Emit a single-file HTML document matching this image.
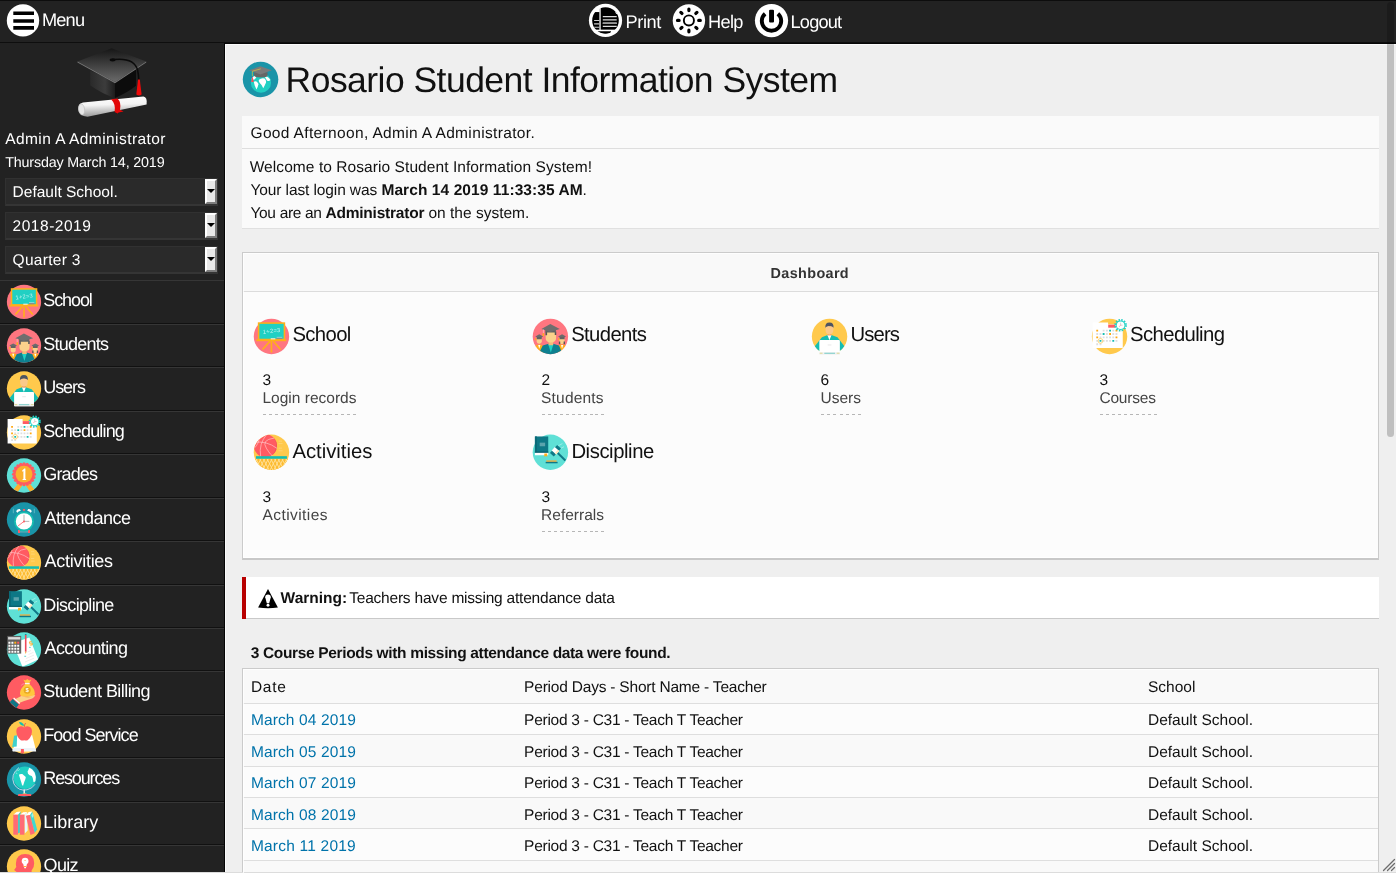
<!DOCTYPE html><html><head><meta charset="utf-8"><title>Rosario Student Information System</title><style>
html,body{margin:0;padding:0}
body{will-change:transform;width:1396px;height:873px;overflow:hidden;position:relative;background:#efefef;font-family:"Liberation Sans",sans-serif;}
div,span,svg{position:absolute;display:block}
.t{white-space:pre;line-height:1;color:#fff;text-rendering:geometricPrecision}
.k{color:#111}.g{color:#444}.a{color:#0073aa}.b{font-weight:700}
.f18{font-size:18.2px}.f16{font-size:15.5px}.f145{font-size:14.7px}.f20{font-size:20.3px}.f14{font-size:14.4px}
#top{left:0;top:0;width:1396px;height:42px;background:#222;border-top:1px solid #0d0d0d;box-sizing:border-box}
#topl{left:0;top:42px;width:1396px;height:1px;background:#0e0e0e}
#topl2{left:224px;top:43px;width:1172px;height:1px;background:#070707}
#side{left:0;top:43px;width:224px;height:829px;background:#222}
#sideb{left:224px;top:43px;width:1px;height:829px;background:#050505}
#hl1{left:225px;top:44px;width:1171px;height:1px;background:#fbfbfb}
#hl2{left:225px;top:44px;width:1px;height:828px;background:#fbfbfb}
#bot{left:0;top:872px;width:1396px;height:1px;background:#dcdcdc}
.sel{left:5px;width:211px;height:25px;background:#2a2a2a;border:1px solid #313131;border-bottom:2px solid #353535}
.selb{left:205px;width:12px;height:25px;background:#e8e8e8;box-sizing:border-box;border:2px solid;border-color:#fff #7c7c7c #7c7c7c #fff}
.selb:after{content:"";position:absolute;left:.2px;top:8.2px;border:4px solid transparent;border-top:4.6px solid #000;border-bottom:0}
.ms{left:0;width:224px;height:1px}
.ms1{background:#111}.ms2{background:#363636}
.box{background:#fafafa}
.ln{height:1px}
</style></head><body>
<svg width="0" height="0" style="left:0;top:0"><defs>
<clipPath id="cc"><circle cx="17" cy="17" r="17.15"/></clipPath>
<clipPath id="ci"><circle cx="17" cy="17" r="13.3"/></clipPath>
<!-- School -->
<g id="i0"><circle cx="17" cy="17" r="17.15" fill="#ff7680"/>
<path d="M15.6 21.5L8.4 29.6M18.8 21.5L25.8 29.6M17 21.5V32.5" stroke="#ffb019" stroke-width="1.6" fill="none"/>
<rect x="3.8" y="3.3" width="26.5" height="17" fill="#ffb019"/><rect x="2.3" y="19.7" width="29" height="1.9" fill="#ffb019"/>
<rect x="5.3" y="4.8" width="23.5" height="14.4" fill="#21d0c3"/>
<text x="17.3" y="13.5" font-family="Liberation Sans, sans-serif" font-size="5.6" fill="#c9f5f1" text-anchor="middle" transform="rotate(-7 17.3 12)" letter-spacing=".3">1+2=3</text>
<rect x="16.3" y="18.8" width="4.4" height="1" fill="#fff4e0"/><rect x="22" y="17.8" width="5.4" height="1.6" fill="#8c8c8c"/><rect x="22" y="17.4" width="5.4" height=".7" fill="#9fe8e4"/></g>
<!-- Students -->
<g id="i1"><circle cx="17" cy="17" r="17.15" fill="#ff7680"/><g clip-path="url(#cc)">
<path d="M1.5 34V26.5L5 24.8H7.5L10.5 26.5V34z" fill="#ffb019"/><path d="M5.2 25.2H7.3L6.2 28.8z" fill="#fff"/>
<path d="M24 34V26.5L27 24.8H29.5L33 26.5V34z" fill="#ffb019"/><path d="M27.3 25.2H29.4L28.3 28.8z" fill="#fff"/>
<rect x="3.7" y="17.6" width="5" height="6.4" rx="2.3" fill="#fbd18b"/><rect x="25.7" y="17.6" width="5" height="6.8" rx="2.3" fill="#fbd18b"/>
<path d="M25.2 22h1.3v2.6h-1.3zM29.8 22h1.3v2.6h-1.3z" fill="#555"/>
<path d="M6.2 14.9L10 17L6.2 18.8L2.4 17z" fill="#6b6b6b"/><path d="M3.8 17.5H8.6V19.6H3.8z" fill="#636363"/>
<path d="M28.3 14.9L32.1 17L28.3 18.8L24.5 17z" fill="#6b6b6b"/><path d="M25.9 17.5H30.7V19.6H25.9z" fill="#636363"/>
<rect x="2.3" y="18.5" width="1" height="2.2" fill="#ffb019"/><rect x="24.6" y="18.5" width="1" height="2.2" fill="#ffb019"/>
<path d="M7 31L9.6 25.8L15.2 24H19.7L25.3 25.8L27.6 31V35H7z" fill="#0e8090"/>
<path d="M14.9 24.6H19.9L17.4 32.6z" fill="#21d0c3"/>
<rect x="15.2" y="21.5" width="4.5" height="4" fill="#f4b97a"/>
<path d="M12.4 12H22.5V18.5Q22.5 22.8 17.45 22.8Q12.4 22.8 12.4 18.5z" fill="#fbd18b"/>
<path d="M12.2 12.3h1.6v3.6h-1.6zM21.2 12.3h1.5v3.2h-1.5z" fill="#555"/>
<path d="M12.1 10H22.3V13.2H12.1z" fill="#626262"/>
<path d="M16.9 5L26.1 9.7L16.9 12.6L8.3 9.7z" fill="#6e6e6e"/>
<path d="M10.2 10.2V13.8" stroke="#ffe3e5" stroke-width=".5"/><rect x="9.5" y="13.8" width="1.4" height="2.9" rx=".4" fill="#ffb019"/></g></g>
<!-- Users -->
<g id="i2"><circle cx="17" cy="17" r="17.15" fill="#ffc94c"/><g clip-path="url(#cc)">
<path d="M0 30L9.6 17.8L15.1 15.7H18.7L24.7 17.8L34 30V36H0z" fill="#15bdb2"/>
<path d="M14.9 15.7H18.9L16.9 20.6z" fill="#fff"/><rect x="15.3" y="14.2" width="3.4" height="1.8" fill="#f08a5a"/>
<path d="M13.1 6.5H20.7V10.5Q20.7 14.9 16.9 15.3Q13.1 14.9 13.1 10.5z" fill="#fbc98a"/>
<path d="M12.9 8.6Q12.6 3.4 16.9 3.4Q21.2 3.4 20.9 8.6Q19.5 6.8 16.9 7Q14.3 6.8 12.9 8.6z" fill="#4d5461"/></g>
<rect x="7.1" y="20.4" width="19.9" height="14.4" rx="1" fill="#fff"/>
<rect x="7.1" y="32.3" width="19.9" height="2.5" rx=".6" fill="#f1f1f1"/><rect x="11.9" y="32.8" width="10.4" height=".9" fill="#6cc8c3"/>
<rect x="7.4" y="32.8" width="2.8" height=".8" fill="#d8d27c"/><rect x="23.9" y="32.8" width="2.8" height=".8" fill="#d8d27c"/>
<rect x="15.2" y="24.8" width="3.6" height=".9" fill="#e6e6e6"/></g>
<!-- Scheduling -->
<g id="i3"><circle cx="17" cy="17" r="17.15" fill="#ffc94c"/>
<path d="M.6 3.6H15.6V5.4H29.8V28.1H.6z" fill="#fff"/><rect x="15.7" y="5.6" width="7" height="2.9" fill="#ff5b62"/>
<g fill="#dedede"><path d="M10.35 10.4h1.8v1.8h-1.8zM13.5 10.4h1.8v1.8h-1.8zM19.7 10.4h1.8v1.8h-1.8zM4.15 13.7h1.8v1.8h-1.8zM7.3 13.7h1.8v1.8h-1.8zM13.5 13.7h1.8v1.8h-1.8zM19.7 13.7h1.8v1.8h-1.8zM22.8 13.7h1.8v1.8h-1.8zM7.3 17h1.8v1.8h-1.8zM10.35 17h1.8v1.8h-1.8zM13.5 17h1.8v1.8h-1.8zM16.6 17h1.8v1.8h-1.8zM19.7 17h1.8v1.8h-1.8zM4.15 20.4h1.8v1.8h-1.8zM10.35 20.4h1.8v1.8h-1.8zM13.5 20.4h1.8v1.8h-1.8zM16.6 20.4h1.8v1.8h-1.8zM22.8 20.4h1.8v1.8h-1.8zM4.15 23.7h1.8v1.8h-1.8zM7.3 23.7h1.8v1.8h-1.8z"/></g>
<g fill="#ffa812"><path d="M4.15 10.4h1.8v1.8h-1.8zM22.8 10.4h1.8v1.8h-1.8zM16.6 13.7h1.8v1.8h-1.8zM4.15 17h1.8v1.8h-1.8zM22.8 17h1.8v1.8h-1.8z"/></g>
<g fill="#15bdb2"><path d="M16.6 10.4h1.8v1.8h-1.8zM10.35 13.7h1.8v1.8h-1.8zM7.3 20.4h1.8v1.8h-1.8zM19.7 20.4h1.8v1.8h-1.8z"/></g>
<circle cx="8.2" cy="21.3" r="2.3" fill="none" stroke="#ffc94c" stroke-width=".7"/>
<circle cx="27.7" cy="6.1" r="5.2" fill="none" stroke="#1fd1c6" stroke-width="1.8" stroke-dasharray="1.5 1.22"/><circle cx="27.7" cy="6.1" r="4.6" fill="#1fd1c6"/><circle cx="27.7" cy="6.1" r="3.7" fill="#fff"/>
<path d="M27.7 3.6V6.1H29.6" stroke="#bbb" stroke-width=".6" fill="none"/><path d="M27.7 6.1L26.4 7.6" stroke="#ff5b62" stroke-width=".5"/></g>
<!-- Grades -->
<g id="i4"><circle cx="17" cy="17" r="17.15" fill="#5fe0d6"/><g clip-path="url(#cc)">
<path d="M11.6 24.6L15.5 26.8L10.2 34.2L8.9 32.3L6 31.8z" fill="#fbb02d"/><path d="M22.4 24.6L18.5 26.8L23.8 34.2L25.1 32.3L28 31.8z" fill="#fbb02d"/></g>
<g fill="#ff5b62"><circle cx="17" cy="15.7" r="10.6"/><circle cx="17.00" cy="5.20" r="1.55"/><circle cx="20.24" cy="5.71" r="1.55"/><circle cx="23.17" cy="7.21" r="1.55"/><circle cx="25.49" cy="9.53" r="1.55"/><circle cx="26.99" cy="12.46" r="1.55"/><circle cx="27.50" cy="15.70" r="1.55"/><circle cx="26.99" cy="18.94" r="1.55"/><circle cx="25.49" cy="21.87" r="1.55"/><circle cx="23.17" cy="24.19" r="1.55"/><circle cx="20.24" cy="25.69" r="1.55"/><circle cx="17.00" cy="26.20" r="1.55"/><circle cx="13.76" cy="25.69" r="1.55"/><circle cx="10.83" cy="24.19" r="1.55"/><circle cx="8.51" cy="21.87" r="1.55"/><circle cx="7.01" cy="18.94" r="1.55"/><circle cx="6.50" cy="15.70" r="1.55"/><circle cx="7.01" cy="12.46" r="1.55"/><circle cx="8.51" cy="9.53" r="1.55"/><circle cx="10.83" cy="7.21" r="1.55"/><circle cx="13.76" cy="5.71" r="1.55"/></g>
<circle cx="17" cy="15.7" r="8.4" fill="#fbb02d"/>
<path d="M15 12.2L17.3 9.9H18.4V20.5H19.1V21.4H15.6V20.5H16.4V12.6L15.4 13.2z" fill="#fff"/></g>
<!-- Attendance -->
<g id="i5"><circle cx="17" cy="17" r="17.15" fill="#1a94a8"/>
<path d="M9.3 9.2Q9.6 6.2 12.8 6.4L13.8 8.2Q11 8.6 10.6 10.3z" fill="#fff"/><path d="M24.7 9.2Q24.4 6.2 21.2 6.4L20.2 8.2Q23 8.6 23.4 10.3z" fill="#fff"/>
<rect x="15.9" y="6.5" width="2.2" height="1.7" rx=".5" fill="#ff5b62"/>
<path d="M6.3 6.2V10.7M27.3 6.2V10.7" stroke="#6fc0cc" stroke-width="1" opacity=".75"/>
<path d="M11 27.6H13V30.4H11zM21 27.6H23V30.4H21z" fill="#ff5b62"/><path d="M13 29.4H21" stroke="#9fb9c0" stroke-width=".8"/>
<circle cx="17" cy="18.9" r="9.1" fill="#fff" stroke="#15bdb2" stroke-width="1.8"/>
<path d="M17 18.9V12.2" stroke="#c9c9c9" stroke-width="1.4"/><path d="M17 18.9H22.3" stroke="#bdbdbd" stroke-width="1.1"/>
<path d="M17 18.9L11.1 23.4" stroke="#ff5b62" stroke-width=".8"/><circle cx="17" cy="18.9" r="1" fill="#ff5b62"/></g>
<!-- Activities -->
<g id="i6"><circle cx="17" cy="17" r="17.15" fill="#ffc94c"/><g clip-path="url(#cc)">
<rect x="0" y="23.3" width="34" height="11" fill="#fdbb2f"/>
<path d="M2 23.3l5.5 11M5.600000000000001 23.3l5.5 11M9.2 23.3l5.5 11M12.8 23.3l5.5 11M16.4 23.3l5.5 11M20 23.3l5.5 11M23.6 23.3l5.5 11M27.2 23.3l5.5 11M30.8 23.3l5.5 11M32 23.3l-5.5 11M28.4 23.3l-5.5 11M24.8 23.3l-5.5 11M21.2 23.3l-5.5 11M17.6 23.3l-5.5 11M14 23.3l-5.5 11M10.4 23.3l-5.5 11M6.8 23.3l-5.5 11M3.2 23.3l-5.5 11" stroke="#ffe19a" stroke-width=".9" fill="none"/>
<circle cx="11.1" cy="10.7" r="11.2" fill="#ff5b62"/><path d="M20.2 4.2A11.2 11.2 0 0 1 17.5 19.9A13 13 0 0 0 20.2 4.2z" fill="#ee4e5a"/>
<path d="M12.5 -.4Q4.5 9 6.5 21M0 7.5Q12 5.5 22.5 13.3M5.5 1.3Q5 9 .2 13.2M19.5 3.3Q7 5 12 13T19 21" stroke="#ffd0d3" stroke-width=".6" fill="none"/>
<path d="M24 6.2h3.2M23.8 8.6h4M24 13h3.2M23.8 15.6h4" stroke="#ffdb8a" stroke-width=".6"/>
<rect x="2" y="20.8" width="30" height="2.5" fill="#15bdb2"/></g></g>
<!-- Discipline -->
<g id="i7"><circle cx="17" cy="17" r="17.15" fill="#5fe0d6"/>
<path d="M24.5 10.8L28.6 8.6M26.5 13.6L30.2 11.6" stroke="#a8efe9" stroke-width=".8"/>
<rect x="2" y="1.7" width="12.9" height="15.8" fill="#0e7886"/><rect x="2" y="1.7" width="2" height="15.8" fill="#0b6a78"/><rect x="2" y="16.2" width="12.9" height="1.4" fill="#0b6170"/>
<rect x="6.6" y="7.7" width="5.3" height="3.5" fill="#5aa3ac"/>
<rect x="2" y="17.6" width="12.9" height="2.3" fill="#fff"/><path d="M11.1 18.3H13.9V21.4L12.5 20.6L11.1 21.4z" fill="#ffb019"/>
<path d="M21.9 15.5L31.5 25" stroke="#0e7886" stroke-width="1.9"/>
<g transform="rotate(-48 21.9 15.5)"><rect x="16.7" y="13" width="10.4" height="5" fill="#0e7886"/><rect x="19.7" y="12.6" width="4.4" height="5.8" fill="#fff"/><rect x="19.7" y="16.6" width="4.4" height="1.8" fill="#ffe7bd"/></g>
<rect x="13" y="24.8" width="10" height="1.6" fill="#e3b44c"/><rect x="12.4" y="26.3" width="11.6" height="1.4" fill="#0e7886"/></g>
<!-- Accounting -->
<g id="i8"><circle cx="17" cy="17" r="17.15" fill="#5fe0d6"/><g clip-path="url(#cc)"><path d="M13.5 7.9L22.4 4.9L31.2 27L15.4 34.2L10.4 21.8z" fill="#fff"/>
<path d="M20.5 19.5l3.5-1.5M21.5 22l5-2.2M19 26l8-3.4M18 29.5l9-3.8" stroke="#eee" stroke-width="1"/></g>
<rect x=".3" y="3.4" width="13.9" height="17.7" fill="#616161"/><rect x="1.1" y="4.6" width="12.2" height="2.4" fill="#dcdcdc"/>
<g fill="#fff"><path d="M1.4 9.2h2v2h-2zM4.4 9.2h2v2h-2zM1.4 12.2h2v2h-2zM4.4 12.2h2v2h-2zM7.3 12.2h2v2h-2zM10.2 12.2h2v2h-2zM1.4 15.2h2v2h-2zM4.4 15.2h2v2h-2zM7.3 15.2h2v2h-2zM10.2 15.2h2v2h-2zM1.4 18.2h2v2h-2zM4.4 18.2h2v2h-2zM7.3 18.2h2v2h-2zM10.2 18.2h2v2h-2z"/></g>
<rect x="7.3" y="9.2" width="2" height="2" fill="#ffb019"/><rect x="10.2" y="9.2" width="2" height="2" fill="#ff5b62"/>
<rect x="17.9" y="1.6" width="1.6" height="1.1" fill="#1a7f8e"/><rect x="17.9" y="2.6" width="1.6" height="16.6" fill="#ee4a5a"/><path d="M17.9 19.2H19.5L18.7 21.4z" fill="#f5b041"/>
<text x="24" y="13" font-family="Liberation Sans, sans-serif" font-size="6.4" font-weight="700" fill="#f7b330" text-anchor="middle" transform="rotate(-22 24 11)">$</text>
<rect x="22" y="14.4" width="1.8" height=".8" fill="#49cfc6"/><rect x="17.3" y="23.3" width="1.8" height=".9" fill="#49cfc6"/></g>
<!-- Student Billing -->
<g id="i9"><circle cx="17" cy="17" r="17.15" fill="#ff5b62"/>
<path d="M18.2 7.6L16.3 3.9L18.4 4.9L20.3 3.4L22.2 4.9L24.3 3.9L22.4 7.6z" fill="#ffc83d"/>
<path d="M18.3 8.6H22.4Q27.8 13.5 27.8 17.8Q27.8 21.2 24.4 21.2H16.4Q13 21.2 13 17.8Q13 13.5 18.3 8.6z" fill="#ffc83d"/>
<path d="M8.6 23.6L14.2 20.6Q18 21.6 22.2 21L28.4 19.6Q27.5 22 25.2 22.9L17.2 25.4L12.1 27.4z" fill="#fbd18b"/><path d="M17 21.3Q22 22.2 27 20.4Q25 22 21 22.4Q18.5 22.3 17 21.3z" fill="#f3bd72"/>
<rect x="18" y="7.4" width="4.7" height="1.3" fill="#fff3f0"/><path d="M17.8 8.2Q14.8 8 14.4 10" stroke="#ff9aa0" stroke-width=".8" fill="none"/>
<circle cx="20.2" cy="14.7" r="3.5" fill="#e9a820"/>
<text x="20.2" y="16.9" font-family="Liberation Sans, sans-serif" font-size="5.8" font-weight="700" fill="#fff" text-anchor="middle">$</text>
<path d="M5.7 23.6L11.8 29L9.3 32.6L2.7 26.7z" fill="#0e7886"/><path d="M6.6 22.6L12.7 28" stroke="#fff" stroke-width="1.3"/></g>
<!-- Food Service -->
<g id="i10"><circle cx="17" cy="17" r="17.15" fill="#ffc94c"/>
<path d="M10.1 15.7H25.2L29.2 31.9H5.6z" fill="#fff"/><path d="M7.1 16.3L10.2 15.7L9.7 27L5.2 27.6z" fill="#3fd2cc"/>
<path d="M5.6 28.6H28.2L29 31.6H5.4z" fill="#edf3f8"/><path d="M13.9 29.6H16.9V34.2L15.4 33.2L13.9 34.2z" fill="#ff5b62"/>
<path d="M17.1 8.1Q19.5 6 22.3 7.2Q25.4 8.6 24.9 12.8Q24.2 18 20.6 20.8Q19.3 21.4 17.2 20.8Q15.2 21.4 13.8 20.8Q10 18 9.4 12.8Q8.9 8.6 12 7.2Q14.7 6 17.1 8.1z" fill="#ff5b62"/>
<path d="M17.2 7.6Q17.3 5 18.6 3.6" stroke="#e64c57" stroke-width=".9" fill="none"/><path d="M12 2.6Q15.6 2.3 17.2 6.3Q13.3 6.6 12 2.6z" fill="#15bdb2"/></g>
<!-- Resources -->
<g id="i11"><circle cx="17" cy="17" r="17.15" fill="#1a94a8"/>
<path d="M17.2 27V31" stroke="#fff" stroke-width="1.3"/><rect x="11.1" y="31.5" width="13.1" height="2.1" rx=".5" fill="#ff5b62"/><path d="M15 31.6Q17.7 30 20.2 31.6z" fill="#e8d36a"/>
<circle cx="17.9" cy="15.2" r="11.3" fill="#21d0c3"/>
<path d="M12 5Q3 12 7 21.5Q11.5 29 20 27.3Q25.5 26 28 21.8" stroke="#dfe6f5" stroke-width=".8" fill="none"/>
<path d="M11.9 12.2Q13.3 11 15.3 11.6L18.8 14.6Q18.6 17 17.6 18.6Q16.6 21.6 16 23.6Q14.6 22.5 14.5 20.4Q13.2 16.6 11.9 12.2z" fill="#fff"/>
<path d="M22.4 5.2Q25.5 6.4 27.6 10Q29.5 14 28.4 18.6Q27.4 20 26.5 19.4Q26.3 15.6 24.8 13.6Q22.3 13.2 21 11.2Q19.9 8.8 21.4 7.6Q21.6 6 22.4 5.2z" fill="#fff"/>
<path d="M9.3 8.6l1.6-1.3.6.6 1.2-1M8.8 10.4l1.5.7" stroke="#d5f3f1" stroke-width=".6" fill="none"/></g>
<!-- Library -->
<g id="i12"><circle cx="17" cy="17" r="17.15" fill="#ffc94c"/>
<path d="M10.9 8.2L13.7 5.1L13 26L10.9 27z" fill="#4fc9c4"/><path d="M6.3 8.2H10.9L13.7 5.1L9.6 5.4z" fill="#fff"/><rect x="6.3" y="8.2" width="4.6" height="20" fill="#ff6b76"/>
<path d="M17.4 8.2L20.2 5.6L20.7 24L17.7 27z" fill="#e6f6fb"/><path d="M12.9 8.2H17.4L20.2 5.4L16.2 5.7z" fill="#fff"/><rect x="12.9" y="8.2" width="4.5" height="20" fill="#ff6b76"/>
<path d="M22.9 8.4L25.2 4.9L30.1 23L27.7 26.4z" fill="#3fd8d2"/><path d="M24.4 8.6l1.4-2 .8 2.8-1.5 2z" fill="#9ff0ec"/><path d="M18.9 9.2L22.9 8.4L25.2 4.9L21.7 5.6z" fill="#fff"/><path d="M18.9 9.2L22.9 8.4L27.8 26.8L23.5 28.4z" fill="#ff6b76"/></g>
<!-- Quiz -->
<g id="i13"><circle cx="17" cy="17" r="17.15" fill="#ffc94c"/><g clip-path="url(#cc)">
<path d="M18.1 4.6Q27.2 4.6 27.2 13.7Q27.2 18.5 24.6 21V35H9.6V22.5L7.1 20.4L9.3 17.6Q8.7 15.2 9 13.2Q9.6 4.6 18.1 4.6z" fill="#ff5b62"/></g>
<circle cx="18.1" cy="11.6" r="3.4" fill="#fff"/><path d="M16.1 13.6H20.1L19.3 17.4H16.9z" fill="#fff"/><rect x="16.9" y="16.6" width="2.4" height=".9" fill="#ffb019"/><rect x="17.1" y="17.5" width="2" height="1.3" rx=".5" fill="#fff"/><rect x="17.2" y="10.6" width="1.8" height="1" rx=".4" fill="#ffd28a"/></g>
<!-- top bar icons -->
<g id="tm"><circle cx="17" cy="17" r="16.2" fill="#fff"/><path d="M7.3 8.1H28V11.7H7.3zM7.3 15.8H28V19.4H7.3zM7.3 22.7H28V26.3H7.3z" fill="#000"/></g>
<g id="tp"><circle cx="17" cy="17" r="16.6" fill="#fff"/><g clip-path="url(#ci)"><rect x="12.3" y="3" width="20" height="23.2" fill="#000"/><rect x="2" y="8.6" width="8.9" height="17.6" fill="#000"/><rect x="11.1" y="4" width="1.1" height="22.2" fill="#a0a0a0"/>
<path d="M24.4 3H31V10.5H27.6z" fill="#fff"/><path d="M24.6 7.6L27.4 10.4H24.6z" fill="#000"/>
<path d="M14.3 12.6H28.2v1.2H14.3zM14.3 15.7H28.2v1.3H14.3zM14.3 19H28.2v1.5H14.3zM14.3 22.4H28.2v1.2H14.3z" fill="#ddd"/><path d="M14.3 19H28.2v1.5H14.3z" fill="#9a9a9a"/>
<path d="M5.6 16.5H10.9v1H5.6zM5.6 19.9H10.9v1.1H5.6zM5.6 23.2H10.9v1.2H5.6z" fill="#ccc"/>
<path d="M8 27.9H22.6Q22.6 30.6 17 30.6Q11.5 30.6 8 27.9z" fill="#000"/></g></g>
<g id="th"><circle cx="17" cy="17" r="16.2" fill="#fff"/><circle cx="17" cy="17" r="5.05" fill="none" stroke="#000" stroke-width="1.9"/>
<path d="M17 7.2V5.6M17 26.8V28.4M7.2 17H5.6M26.8 17H28.4M10.07 10.07L8.94 8.94M23.93 23.93L25.06 25.06M10.07 23.93L8.94 25.06M23.93 10.07L25.06 8.94" stroke="#000" stroke-width="3.2" stroke-linecap="round"/></g>
<g id="tl"><circle cx="17" cy="17" r="16.6" fill="#fff"/><path d="M10.6 10.2A9.7 9.7 0 1 0 23.4 10.2" fill="none" stroke="#000" stroke-width="3.9"/><rect x="14.6" y="6.2" width="4.9" height="12.8" rx="1.1" fill="#000"/></g>
<!-- title icon (36 box) -->
<g id="ti"><circle cx="18" cy="18" r="17.75" fill="#1a94a8"/><circle cx="18.4" cy="21.3" r="10.1" fill="#21d0c3"/>
<path d="M11.2 20.2Q12.8 19.2 14.4 20.2L16 22.6Q15.4 25.4 13.9 28Q12.2 25 11.2 20.2zM16.4 18.4Q19 16 22 17Q24 18.6 23.4 21.2Q22 24.4 20.7 26.8Q19.2 23.2 17.2 21.6Q15.8 19.8 16.4 18.4zM22 14.6Q26 15 27.9 18.6Q26.4 20.4 24.4 19Q22.8 17 22 14.6zM9.6 16.2Q11.8 14 14.6 14.4L12.4 17.8Q10.6 18.6 9 17.8z" fill="#fff"/>
<path d="M11.6 10.7H25V13.8Q25 16 18.3 16Q11.6 16 11.6 13.8z" fill="#666"/><path d="M17.9 4.9L29.2 8.9L17.9 13L6.6 8.9z" fill="#7a7a7a"/>
<path d="M18.2 7.4L9.8 9.8V14.6" stroke="#d7c53e" stroke-width=".7" fill="none"/><path d="M9.9 14.6L11.2 20.6H8.6z" fill="#ff4a55"/></g>
<!-- warning -->
<g id="wi"><path d="M10 1L19.9 19.4Q10 20.9 .1 19.4z" fill="#000"/><path d="M7.2 9.2Q7.2 6.4 10 6.4Q12.8 6.4 12.8 9.2L11.2 15.2H8.8z" fill="#fff"/><circle cx="10" cy="17.3" r="1.45" fill="#fff"/></g>
</defs></svg>

<div id="top"></div><div id="topl"></div><div id="topl2"></div><div id="side"></div><div id="sideb"></div><div id="hl1"></div><div id="hl2"></div>
<div class="sel" style="top:178px"></div><div class="selb" style="top:179px"></div>
<div class="sel" style="top:212px"></div><div class="selb" style="top:213px"></div>
<div class="sel" style="top:246px"></div><div class="selb" style="top:247px"></div>
<div class="ms ms2" style="top:280px"></div>
<div class="ms ms1" style="top:323px"></div>
<div class="ms ms2" style="top:324px"></div>
<div class="ms ms1" style="top:366px"></div>
<div class="ms ms2" style="top:367px"></div>
<div class="ms ms1" style="top:410px"></div>
<div class="ms ms2" style="top:411px"></div>
<div class="ms ms1" style="top:453px"></div>
<div class="ms ms2" style="top:454px"></div>
<div class="ms ms1" style="top:497px"></div>
<div class="ms ms2" style="top:498px"></div>
<div class="ms ms1" style="top:540px"></div>
<div class="ms ms2" style="top:541px"></div>
<div class="ms ms1" style="top:584px"></div>
<div class="ms ms2" style="top:585px"></div>
<div class="ms ms1" style="top:627px"></div>
<div class="ms ms2" style="top:628px"></div>
<div class="ms ms1" style="top:670px"></div>
<div class="ms ms2" style="top:671px"></div>
<div class="ms ms1" style="top:714px"></div>
<div class="ms ms2" style="top:715px"></div>
<div class="ms ms1" style="top:757px"></div>
<div class="ms ms2" style="top:758px"></div>
<div class="ms ms1" style="top:801px"></div>
<div class="ms ms2" style="top:802px"></div>
<div class="ms ms1" style="top:844px"></div>
<div class="ms ms2" style="top:845px"></div>
<svg style="left:6px;top:283px" width="36" height="37" viewBox="-1.000 -1.900 36.000 37.000"><use href="#i0"/></svg>
<svg style="left:6px;top:327px" width="36" height="37" viewBox="-1.000 -1.500 36.000 37.000"><use href="#i1"/></svg>
<svg style="left:6px;top:370px" width="36" height="37" viewBox="-1.000 -1.500 36.000 37.000"><use href="#i2"/></svg>
<svg style="left:6px;top:414px" width="36" height="37" viewBox="-1.000 -1.500 36.000 37.000"><use href="#i3"/></svg>
<svg style="left:6px;top:457px" width="36" height="37" viewBox="-1.000 -1.500 36.000 37.000"><use href="#i4"/></svg>
<svg style="left:6px;top:501px" width="36" height="37" viewBox="-1.000 -1.500 36.000 37.000"><use href="#i5"/></svg>
<svg style="left:6px;top:544px" width="36" height="37" viewBox="-1.000 -1.500 36.000 37.000"><use href="#i6"/></svg>
<svg style="left:6px;top:588px" width="36" height="37" viewBox="-1.000 -1.500 36.000 37.000"><use href="#i7"/></svg>
<svg style="left:6px;top:631px" width="36" height="37" viewBox="-1.000 -1.500 36.000 37.000"><use href="#i8"/></svg>
<svg style="left:6px;top:674px" width="36" height="37" viewBox="-1.000 -1.500 36.000 37.000"><use href="#i9"/></svg>
<svg style="left:6px;top:718px" width="36" height="37" viewBox="-1.000 -1.500 36.000 37.000"><use href="#i10"/></svg>
<svg style="left:6px;top:761px" width="36" height="37" viewBox="-1.000 -1.500 36.000 37.000"><use href="#i11"/></svg>
<svg style="left:6px;top:805px" width="36" height="37" viewBox="-1.000 -1.500 36.000 37.000"><use href="#i12"/></svg>
<svg style="left:6px;top:848px" width="36" height="37" viewBox="-1.000 -1.500 36.000 37.000"><use href="#i13"/></svg>
<svg style="left:60px;top:40px" width="110" height="85" viewBox="0 0 110 85">
<defs><linearGradient id="lg1" x1="0" y1="0" x2="0" y2="1"><stop offset="0" stop-color="#161616"/><stop offset="1" stop-color="#6a6a6a"/></linearGradient>
<linearGradient id="lg2" x1="0" y1="0" x2="1" y2="0"><stop offset="0" stop-color="#2a2a2a"/><stop offset=".6" stop-color="#3c3c3c"/><stop offset="1" stop-color="#1c1c1c"/></linearGradient>
<linearGradient id="lg3" x1="0" y1="0" x2=".12" y2="1"><stop offset="0" stop-color="#fff"/><stop offset=".45" stop-color="#f4f4f4"/><stop offset="1" stop-color="#9a9a9a"/></linearGradient></defs>
<path d="M30.2 30.5V45.3Q42 54 55 57.9V42z" fill="url(#lg2)"/>
<path d="M55 42V57.9Q67 53 76 45.8V29.5z" fill="#0c0c0c"/>
<path d="M17.5 21.4L51.6 8.3L86.2 21.4L55 41.9z" fill="url(#lg1)"/><path d="M17.5 21.4L55 41.9L86.2 21.4V22.6L55 43.2L17.5 22.6z" fill="#777"/>
<ellipse cx="52.6" cy="19.8" rx="3" ry="1.6" fill="#0a0a0a"/><path d="M53 19.6Q74 17 77.6 30Q78.6 35 78.8 40" stroke="#0a0a0a" stroke-width="1.5" fill="none"/>
<path d="M78 39.6H79.8L81.6 54.6Q79 56.6 76.3 54.6z" fill="#ee0a0a"/>
<path d="M23 62.6L83.4 56.4Q87.5 57 86.6 64.4L27.5 76.8Q18.5 76 18.2 69Q18.6 63.4 23 62.6z" fill="url(#lg3)"/>
<ellipse cx="21.6" cy="69.4" rx="3" ry="5.6" fill="#e6e6e6" stroke="#bdbdbd" stroke-width=".6" transform="rotate(-8 21.6 69.4)"/>
<path d="M51 59.2L57.6 58.4Q61.6 62.6 60 69.8L63.6 71.4L58.6 72.6L57.6 73.6L54.6 72Q56 64 51 59.2z" fill="#e20808"/>
</svg>

<svg style="left:5px;top:2px" width="36" height="37" viewBox="-1.000 -1.400 36.000 37.000"><use href="#tm"/></svg>
<svg style="left:587px;top:2px" width="37" height="37" viewBox="-1.500 -1.450 37.000 37.000"><use href="#tp"/></svg>
<svg style="left:670px;top:2px" width="37" height="37" viewBox="-1.900 -1.400 37.000 37.000"><use href="#th"/></svg>
<svg style="left:753px;top:2px" width="37" height="37" viewBox="-1.500 -1.550 37.000 37.000"><use href="#tl"/></svg>
<svg style="left:241px;top:60px" width="39" height="39" viewBox="-1.550 -1.430 39.000 39.000"><use href="#ti"/></svg>
<div class="box" style="left:242px;top:116px;width:1137px;height:32px"></div>
<div class="ln" style="left:242px;top:148px;width:1137px;background:#dedede"></div>
<div class="box" style="left:242px;top:149px;width:1137px;height:79px"></div>
<div class="ln" style="left:242px;top:228px;width:1137px;background:#e0e0e0"></div>
<div style="left:242px;top:252px;width:1135px;height:305px;background:#fcfcfc;border:1px solid #cbcbcb;border-bottom:2px solid #c8c8c8"></div>
<div style="left:243px;top:253px;width:1135px;height:38px;background:#f9f9f9"></div>
<div class="ln" style="left:243px;top:291px;width:1135px;background:#dcdcdc"></div>
<div style="left:242px;top:577px;width:1137px;height:41px;background:#fff"></div>
<div class="ln" style="left:242px;top:618px;width:1137px;background:#c9c9c9"></div>
<div style="left:242px;top:577px;width:4px;height:42px;background:#b80000"></div>
<div style="left:242px;top:668px;width:1135px;height:204px;background:#fcfcfc;border:1px solid #cbcbcb;border-bottom:0"></div>
<div style="left:243px;top:669px;width:1135px;height:34px;background:#f9f9f9"></div>
<div class="ln" style="left:243px;top:703px;width:1135px;background:#dedede"></div>
<div class="ln" style="left:243px;top:734px;width:1135px;background:#dedede"></div>
<div style="left:243px;top:735px;width:1135px;height:31px;background:#f9f9f9"></div>
<div class="ln" style="left:243px;top:766px;width:1135px;background:#dedede"></div>
<div class="ln" style="left:243px;top:797px;width:1135px;background:#dedede"></div>
<div style="left:243px;top:798px;width:1135px;height:30px;background:#f9f9f9"></div>
<div class="ln" style="left:243px;top:828px;width:1135px;background:#dedede"></div>
<div class="ln" style="left:243px;top:860px;width:1135px;background:#dedede"></div>
<svg style="left:252px;top:317px" width="38" height="38" viewBox="-1.840 -1.840 36.809 36.809"><use href="#i0"/></svg>
<svg style="left:531px;top:317px" width="38" height="38" viewBox="-1.792 -1.840 36.809 36.809"><use href="#i1"/></svg>
<svg style="left:811px;top:317px" width="38" height="38" viewBox="-0.969 -1.840 36.809 36.809"><use href="#i2"/></svg>
<svg style="left:1091px;top:317px" width="38" height="38" viewBox="-0.969 -1.840 36.809 36.809"><use href="#i3"/></svg>
<svg style="left:252px;top:433px" width="38" height="38" viewBox="-1.840 -1.647 36.809 36.809"><use href="#i6"/></svg>
<svg style="left:531px;top:433px" width="38" height="38" viewBox="-1.792 -1.647 36.809 36.809"><use href="#i7"/></svg>
<svg style="left:258px;top:588px" width="20" height="21" viewBox="0 0 20 21"><use href="#wi"/></svg>
<div style="left:243px;top:861px;width:1135px;height:11px;background:#f9f9f9"></div>
<div style="left:262.8px;top:414px;width:93.2px;height:1px;background:repeating-linear-gradient(90deg,#b6b6b6 0,#b6b6b6 3px,transparent 3px,transparent 6.013px)"></div>
<div style="left:541.8px;top:414px;width:62.4px;height:1px;background:repeating-linear-gradient(90deg,#b6b6b6 0,#b6b6b6 3px,transparent 3px,transparent 5.940px)"></div>
<div style="left:820.8px;top:414px;width:40.4px;height:1px;background:repeating-linear-gradient(90deg,#b6b6b6 0,#b6b6b6 3px,transparent 3px,transparent 6.233px)"></div>
<div style="left:1099.8px;top:414px;width:57.4px;height:1px;background:repeating-linear-gradient(90deg,#b6b6b6 0,#b6b6b6 3px,transparent 3px,transparent 6.044px)"></div>
<div style="left:541.8px;top:531px;width:62.4px;height:1px;background:repeating-linear-gradient(90deg,#b6b6b6 0,#b6b6b6 3px,transparent 3px,transparent 5.940px)"></div>
<svg style="left:1380px;top:856px" width="16" height="16" viewBox="0 0 16 16"><path d="M3.5 14.5L14.5 3.5M7.5 14.5L14.5 7.5M11.5 14.5L14.5 11.5" stroke="#6c6c6c" stroke-width="1.25" stroke-linecap="round" fill="none"/></svg>
<div id="bot"></div>
<div style="left:243px;top:253px;width:1135px;height:305px;box-shadow:inset 1px 1px 0 rgba(255,255,255,.8),inset 0 -1px 0 #fff"></div>
<div style="left:243px;top:669px;width:1135px;height:204px;box-shadow:inset 1px 1px 0 rgba(255,255,255,.8)"></div>
<span id="menu" class="t f18" style="left:42.00px;top:11.39px;letter-spacing:-0.833px;">Menu</span>
<span id="print" class="t f18" style="left:625.50px;top:12.59px;letter-spacing:-0.400px;">Print</span>
<span id="help" class="t f18" style="left:708.00px;top:12.59px;letter-spacing:-0.667px;">Help</span>
<span id="logout" class="t f18" style="left:790.50px;top:12.59px;letter-spacing:-0.800px;">Logout</span>
<span id="uname" class="t f16" style="left:5.20px;top:131.78px;letter-spacing:0.435px;">Admin A Administrator</span>
<span id="udate" class="t" style="left:5.20px;top:155.70px;font-size:14.3px;letter-spacing:-0.159px;">Thursday March 14, 2019</span>
<span id="sel1" class="t f16" style="left:12.60px;top:184.88px;">Default School.</span>
<span id="sel2" class="t f16" style="left:12.60px;top:218.88px;letter-spacing:0.513px;">2018-2019</span>
<span id="sel3" class="t f16" style="left:12.60px;top:252.88px;letter-spacing:0.288px;">Quarter 3</span>
<span id="m0" class="t" style="left:43.30px;top:290.76px;font-size:18px;letter-spacing:-1.100px;">School</span>
<span id="m1" class="t" style="left:43.30px;top:334.76px;font-size:18px;letter-spacing:-0.757px;">Students</span>
<span id="m2" class="t" style="left:43.30px;top:377.76px;font-size:18px;letter-spacing:-1.100px;">Users</span>
<span id="m3" class="t" style="left:43.30px;top:421.76px;font-size:18px;letter-spacing:-0.833px;">Scheduling</span>
<span id="m4" class="t" style="left:43.30px;top:464.76px;font-size:18px;letter-spacing:-0.860px;">Grades</span>
<span id="m5" class="t" style="left:44.60px;top:508.76px;font-size:18px;letter-spacing:-0.522px;">Attendance</span>
<span id="m6" class="t" style="left:44.60px;top:551.76px;font-size:18px;letter-spacing:-0.278px;">Activities</span>
<span id="m7" class="t" style="left:43.30px;top:595.76px;font-size:18px;letter-spacing:-0.667px;">Discipline</span>
<span id="m8" class="t" style="left:44.60px;top:638.76px;font-size:18px;letter-spacing:-0.633px;">Accounting</span>
<span id="m9" class="t" style="left:43.30px;top:681.76px;font-size:18px;letter-spacing:-0.557px;">Student Billing</span>
<span id="m10" class="t" style="left:43.30px;top:725.76px;font-size:18px;letter-spacing:-0.973px;">Food Service</span>
<span id="m11" class="t" style="left:43.30px;top:768.76px;font-size:18px;letter-spacing:-1.150px;">Resources</span>
<span id="m12" class="t" style="left:43.30px;top:812.76px;font-size:18px;">Library</span>
<span id="m13" class="t" style="left:43.60px;top:855.76px;font-size:18px;letter-spacing:-0.700px;">Quiz</span>
<span id="title" class="t k" style="left:285.60px;top:62.95px;font-size:35.5px;letter-spacing:-0.539px;">Rosario Student Information System</span>
<span id="greet" class="t f16 k" style="left:250.50px;top:125.68px;letter-spacing:0.346px;">Good Afternoon, Admin A Administrator.</span>
<span id="w1" class="t f16 k" style="left:249.70px;top:160.38px;letter-spacing:0.071px;">Welcome to Rosario Student Information System!</span>
<span id="w2a" class="t f16 k" style="left:250.50px;top:182.88px;letter-spacing:-0.111px;">Your last login was</span>
<span id="w2b" class="t f16 k b" style="left:381.40px;top:182.88px;letter-spacing:0.083px;">March 14 2019 11:33:35 AM</span>
<span id="w2c" class="t f16 k" style="left:582.50px;top:182.88px;">.</span>
<span id="w3a" class="t f16 k" style="left:250.50px;top:206.38px;letter-spacing:-0.333px;">You are an</span>
<span id="w3b" class="t f16 k b" style="left:325.50px;top:206.38px;letter-spacing:-0.225px;">Administrator</span>
<span id="w3c" class="t f16 k" style="left:428.50px;top:206.38px;">on the system.</span>
<span id="dash" class="t f14 b" style="left:770.60px;top:266.61px;color:#333;letter-spacing:0.362px;">Dashboard</span>
<span id="d0" class="t f20 k" style="left:292.40px;top:324.92px;letter-spacing:-0.620px;">School</span>
<span id="d1" class="t f20 k" style="left:571.20px;top:324.92px;letter-spacing:-0.629px;">Students</span>
<span id="d2" class="t f20 k" style="left:850.60px;top:324.92px;letter-spacing:-0.925px;">Users</span>
<span id="d3" class="t f20 k" style="left:1130.10px;top:324.92px;letter-spacing:-0.611px;">Scheduling</span>
<span id="d4" class="t f20 k" style="left:292.40px;top:441.82px;">Activities</span>
<span id="d5" class="t f20 k" style="left:571.40px;top:441.82px;letter-spacing:-0.433px;">Discipline</span>
<span id="n0" class="t f16 k" style="left:262.60px;top:372.58px;">3</span>
<span id="n1" class="t f16 k" style="left:541.60px;top:372.58px;">2</span>
<span id="n2" class="t f16 k" style="left:820.60px;top:372.58px;">6</span>
<span id="n3" class="t f16 k" style="left:1099.60px;top:372.58px;">3</span>
<span id="n4" class="t f16 k" style="left:262.60px;top:489.58px;">3</span>
<span id="n5" class="t f16 k" style="left:541.60px;top:489.58px;">3</span>
<span id="l0" class="t f16 g" style="left:262.50px;top:390.88px;">Login records</span>
<span id="l1" class="t f16 g" style="left:541.10px;top:390.88px;letter-spacing:0.186px;">Students</span>
<span id="l2" class="t f16 g" style="left:820.50px;top:390.88px;">Users</span>
<span id="l3" class="t f16 g" style="left:1099.40px;top:390.88px;letter-spacing:-0.183px;">Courses</span>
<span id="l4" class="t f16 g" style="left:262.50px;top:507.88px;letter-spacing:0.422px;">Activities</span>
<span id="l5" class="t f16 g" style="left:541.10px;top:507.88px;">Referrals</span>
<span id="wa" class="t f16 k b" style="left:280.60px;top:590.98px;">Warning:</span>
<span id="wc" class="t f16 k" style="left:349.20px;top:590.98px;letter-spacing:-0.208px;">Teachers have missing attendance data</span>
<span id="cp" class="t f16 k b" style="left:250.70px;top:645.98px;letter-spacing:-0.345px;">3 Course Periods with missing attendance data were found.</span>
<span id="h0" class="t f16 k" style="left:250.90px;top:679.88px;letter-spacing:0.767px;">Date</span>
<span id="h1" class="t f16 k" style="left:524.10px;top:679.88px;letter-spacing:-0.209px;">Period Days - Short Name - Teacher</span>
<span id="h2" class="t f16 k" style="left:1148.00px;top:679.88px;">School</span>
<span id="r0a" class="t f16 a" style="left:250.90px;top:712.88px;letter-spacing:0.133px;">March 04 2019</span>
<span id="r0b" class="t f16 k" style="left:524.10px;top:712.88px;letter-spacing:-0.268px;">Period 3 - C31 - Teach T Teacher</span>
<span id="r0c" class="t f16 k" style="left:1148.00px;top:712.88px;">Default School.</span>
<span id="r1a" class="t f16 a" style="left:250.90px;top:744.88px;letter-spacing:0.133px;">March 05 2019</span>
<span id="r1b" class="t f16 k" style="left:524.10px;top:744.88px;letter-spacing:-0.268px;">Period 3 - C31 - Teach T Teacher</span>
<span id="r1c" class="t f16 k" style="left:1148.00px;top:744.88px;">Default School.</span>
<span id="r2a" class="t f16 a" style="left:250.90px;top:775.88px;letter-spacing:0.133px;">March 07 2019</span>
<span id="r2b" class="t f16 k" style="left:524.10px;top:775.88px;letter-spacing:-0.268px;">Period 3 - C31 - Teach T Teacher</span>
<span id="r2c" class="t f16 k" style="left:1148.00px;top:775.88px;">Default School.</span>
<span id="r3a" class="t f16 a" style="left:250.90px;top:807.88px;letter-spacing:0.133px;">March 08 2019</span>
<span id="r3b" class="t f16 k" style="left:524.10px;top:807.88px;letter-spacing:-0.268px;">Period 3 - C31 - Teach T Teacher</span>
<span id="r3c" class="t f16 k" style="left:1148.00px;top:807.88px;">Default School.</span>
<span id="r4a" class="t f16 a" style="left:250.90px;top:838.88px;letter-spacing:0.217px;">March 11 2019</span>
<span id="r4b" class="t f16 k" style="left:524.10px;top:838.88px;letter-spacing:-0.268px;">Period 3 - C31 - Teach T Teacher</span>
<span id="r4c" class="t f16 k" style="left:1148.00px;top:838.88px;">Default School.</span>
<div style="left:1387px;top:2px;width:7px;height:435px;background:rgba(0,0,0,.2);border-radius:3.5px"></div>
</body></html>
